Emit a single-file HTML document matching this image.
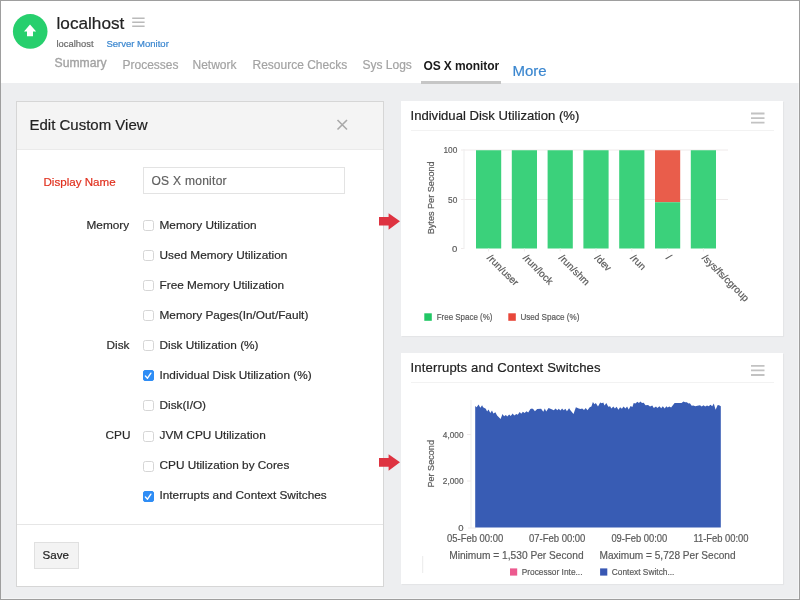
<!DOCTYPE html>
<html><head><meta charset="utf-8">
<style>
*{margin:0;padding:0;box-sizing:border-box}
html,body{width:800px;height:600px;overflow:hidden;background:#fff}
body{position:relative;font-family:"Liberation Sans",sans-serif;color:#333}
.a{position:absolute;white-space:nowrap;line-height:1}
.t{will-change:transform;transform:translateX(-0.5px);-webkit-text-stroke:0.2px currentColor}
.g{will-change:transform}
.g text{stroke:#5a5a5a;stroke-width:0.2px}
#frame{position:absolute;left:0;top:0;width:800px;height:600px;border:1px solid #9e9e9e;pointer-events:none;z-index:50}
#bg{position:absolute;left:0;top:83px;width:800px;height:517px;background:#edeef0}
#modal{position:absolute;left:16px;top:101px;width:368px;height:486px;background:#fff;border:1px solid #d6d6d6}
#mhead{position:absolute;left:0;top:0;width:366px;height:48px;background:#f4f4f4;border-bottom:1px solid #eaeaea}
.card{position:absolute;left:401px;width:382px;background:#fff;box-shadow:1px 1px 1px rgba(0,0,0,0.035)}
.cb{position:absolute;left:143px;width:11px;height:11px;border:1px solid #d6d6d6;border-radius:2.5px;background:#fff}
.cbc{background:#2f8df5;border-color:#2f8df5;border-radius:2px}
.lbl{font-size:11.8px;color:#2b2b2b}
.ham{position:absolute;height:2px;background:#c4c4c4}
</style></head><body>
<div id="bg"></div>
<div class="a" style="left:798px;top:83px;width:1px;height:516px;background:#f4f5f6"></div>
<div class="a" style="left:0;top:598px;width:799px;height:1px;background:#f4f5f6"></div>

<!-- header -->
<svg class="a" style="left:0;top:0" width="60" height="60">
<circle cx="30.2" cy="31.4" r="17.3" fill="#27cf6d"/>
<path d="M30 24.6 L36.2 31.4 L33 31.4 L33 36.2 L27 36.2 L27 31.4 L24 31.4 Z" fill="#fff"/>
</svg>
<div class="a t" style="left:56.8px;top:14.5px;font-size:17.2px;color:#222">localhost</div>
<svg class="a" style="left:0;top:0" width="160" height="40"><path d="M132.2 18.2H144.6M132.2 22.2H144.6M132.2 26.2H144.6" stroke="#bababa" stroke-width="1.5"/></svg>
<div class="a t" style="left:57px;top:39px;font-size:9.4px;color:#6a6a6a">localhost</div>
<div class="a t" style="left:107px;top:39px;font-size:9.5px;color:#3a86cf">Server Monitor</div>

<div class="a t" style="left:54.5px;top:57.3px;font-size:12.2px;color:#a3a3a3;-webkit-text-stroke:0.35px #a3a3a3">Summary</div>
<div class="a t" style="left:122.5px;top:58.9px;font-size:12px;color:#a3a3a3">Processes</div>
<div class="a t" style="left:193px;top:58.9px;font-size:12px;color:#a3a3a3">Network</div>
<div class="a t" style="left:253px;top:58.9px;font-size:12px;color:#a3a3a3">Resource Checks</div>
<div class="a t" style="left:362.5px;top:58.9px;font-size:12px;color:#a3a3a3">Sys Logs</div>
<div class="a t" style="left:424px;top:59.9px;font-size:12px;color:#1a1a1a;font-weight:700;letter-spacing:-0.1px;-webkit-text-stroke:0">OS X monitor</div>
<div class="a" style="position:absolute;left:421px;top:81px;width:80px;height:3px;background:#c6c6c6"></div>
<div class="a t" style="left:512.5px;top:62.6px;font-size:15px;color:#3a86cf">More</div>

<!-- modal -->
<div id="modal">
  <div id="mhead"></div>
</div>
<div class="a t" style="left:29.5px;top:117.3px;font-size:15px;color:#222">Edit Custom View</div>
<svg class="a" style="left:330px;top:112px" width="24" height="24"><path d="M7.5 8 L17 17.5 M17 8 L7.5 17.5" stroke="#a9a9a9" stroke-width="1.6"/></svg>

<div class="a t" style="left:44px;top:176.2px;font-size:11.6px;color:#e0301e">Display Name</div>
<div class="a" style="left:143px;top:167px;width:202px;height:27px;border:1px solid #e3e3e3;background:#fff"></div>
<div class="a t" style="left:151.5px;top:175.3px;font-size:12px;color:#606060;letter-spacing:0.28px">OS X monitor</div>

<div class="a t lbl" style="left:87px;top:219.5px">Memory</div>
<div class="a t lbl" style="left:106.5px;top:339.9px">Disk</div>
<div class="a t lbl" style="left:106.3px;top:430.2px">CPU</div>

<div class="cb" style="top:219.8px"></div>
<div class="a t lbl" style="left:160px;top:219.5px">Memory Utilization</div>
<div class="cb" style="top:249.9px"></div>
<div class="a t lbl" style="left:160px;top:249.6px">Used Memory Utilization</div>
<div class="cb" style="top:280.0px"></div>
<div class="a t lbl" style="left:160px;top:279.7px">Free Memory Utilization</div>
<div class="cb" style="top:310.1px"></div>
<div class="a t lbl" style="left:160px;top:309.8px">Memory Pages(In/Out/Fault)</div>
<div class="cb" style="top:340.2px"></div>
<div class="a t lbl" style="left:160px;top:339.9px">Disk Utilization (%)</div>
<div class="cb cbc" style="top:370.3px"><svg width="9" height="9" style="position:absolute;left:0;top:0"><path d="M1.4 5.1 L3.5 7.2 L6.9 2.2" stroke="#fff" stroke-width="1.4" fill="none" stroke-linecap="round" stroke-linejoin="round"/></svg></div>
<div class="a t lbl" style="left:160px;top:370.0px">Individual Disk Utilization (%)</div>
<div class="cb" style="top:400.4px"></div>
<div class="a t lbl" style="left:160px;top:400.1px">Disk(I/O)</div>
<div class="cb" style="top:430.5px"></div>
<div class="a t lbl" style="left:160px;top:430.2px">JVM CPU Utilization</div>
<div class="cb" style="top:460.6px"></div>
<div class="a t lbl" style="left:160px;top:460.3px">CPU Utilization by Cores</div>
<div class="cb cbc" style="top:490.7px"><svg width="9" height="9" style="position:absolute;left:0;top:0"><path d="M1.4 5.1 L3.5 7.2 L6.9 2.2" stroke="#fff" stroke-width="1.4" fill="none" stroke-linecap="round" stroke-linejoin="round"/></svg></div>
<div class="a t lbl" style="left:160px;top:490.4px">Interrupts and Context Switches</div>

<div class="a" style="left:17px;top:524px;width:366px;height:1px;background:#e6e6e6"></div>
<div class="a" style="left:34px;top:542px;width:45px;height:27px;background:#f3f3f3;border:1px solid #e0e0e0"></div>
<div class="a t" style="left:43px;top:549.3px;font-size:11.6px;color:#222">Save</div>

<!-- cards -->
<div class="card" style="top:101px;height:235px"></div>
<div class="card" style="top:353px;height:231px"></div>

<div class="a t" style="left:410.5px;top:109px;font-size:13.1px;color:#222">Individual Disk Utilization (%)</div>
<svg class="a" style="left:0;top:0" width="800" height="600"><path d="M751 113.5H764.5M751 118.1H764.5M751 122.7H764.5M751 365.9H764.5M751 370.4H764.5M751 375H764.5" stroke="#c2c2c2" stroke-width="1.8"/></svg>
<div class="a" style="left:411px;top:130px;width:363px;height:1px;background:#f2f2f2"></div>

<div class="a t" style="left:410.5px;top:361px;font-size:13.1px;color:#222;letter-spacing:0.15px">Interrupts and Context Switches</div>

<div class="a" style="left:411px;top:382px;width:363px;height:1px;background:#f2f2f2"></div>

<!-- charts -->
<svg class="a g" style="left:0;top:0;z-index:5" width="800" height="600" font-family="Liberation Sans">
<g>
<line x1="461" y1="150" x2="728" y2="150" stroke="#efeaea" stroke-width="1"/>
<line x1="461" y1="199.5" x2="728" y2="199.5" stroke="#efeaea" stroke-width="1"/>
<line x1="461" y1="248.5" x2="464" y2="248.5" stroke="#efeaea" stroke-width="1"/>
<line x1="464" y1="149" x2="464" y2="249" stroke="#f0f0f0" stroke-width="1.2"/>
<rect x="476.0" y="150.25" width="25.2" height="98.25" fill="#3bd17b"/><rect x="511.8" y="150.25" width="25.2" height="98.25" fill="#3bd17b"/><rect x="547.6" y="150.25" width="25.2" height="98.25" fill="#3bd17b"/><rect x="583.4" y="150.25" width="25.2" height="98.25" fill="#3bd17b"/><rect x="619.2" y="150.25" width="25.2" height="98.25" fill="#3bd17b"/><rect x="655.0" y="150.25" width="25.2" height="52" fill="#e95d4b"/><rect x="655.0" y="202.25" width="25.2" height="46.25" fill="#3bd17b"/><rect x="690.8" y="150.25" width="25.2" height="98.25" fill="#3bd17b"/>
<line x1="488.6" y1="248.5" x2="488.6" y2="251.5" stroke="#efeaea" stroke-width="1"/><line x1="524.4" y1="248.5" x2="524.4" y2="251.5" stroke="#efeaea" stroke-width="1"/><line x1="560.2" y1="248.5" x2="560.2" y2="251.5" stroke="#efeaea" stroke-width="1"/><line x1="596.0" y1="248.5" x2="596.0" y2="251.5" stroke="#efeaea" stroke-width="1"/><line x1="631.8" y1="248.5" x2="631.8" y2="251.5" stroke="#efeaea" stroke-width="1"/><line x1="667.6" y1="248.5" x2="667.6" y2="251.5" stroke="#efeaea" stroke-width="1"/><line x1="703.4" y1="248.5" x2="703.4" y2="251.5" stroke="#efeaea" stroke-width="1"/>
<text x="457.3" y="153.25" font-size="9.5" fill="#5a5a5a" text-anchor="end" textLength="13.9" lengthAdjust="spacingAndGlyphs">100</text>
<text x="457.3" y="202.75" font-size="9.5" fill="#5a5a5a" text-anchor="end" textLength="9.3" lengthAdjust="spacingAndGlyphs">50</text>
<text x="457.3" y="251.9" font-size="9.5" fill="#5a5a5a" text-anchor="end">0</text>
<text x="434" y="197.8" font-size="9.5" fill="#5a5a5a" text-anchor="middle" transform="rotate(-90 434 197.8)" textLength="73" lengthAdjust="spacingAndGlyphs">Bytes Per Second</text>
<text x="486.6" y="258.5" transform="rotate(45 486.6 258.5)" font-size="10" fill="#5a5a5a">/run/user</text><text x="522.4" y="258.5" transform="rotate(45 522.4 258.5)" font-size="10" fill="#5a5a5a">/run/lock</text><text x="558.2" y="258.5" transform="rotate(45 558.2 258.5)" font-size="10" fill="#5a5a5a">/run/shm</text><text x="594.0" y="258.5" transform="rotate(45 594.0 258.5)" font-size="10" fill="#5a5a5a">/dev</text><text x="629.8" y="258.5" transform="rotate(45 629.8 258.5)" font-size="10" fill="#5a5a5a">/run</text><text x="665.6" y="258.5" transform="rotate(45 665.6 258.5)" font-size="10" fill="#5a5a5a">/</text><text x="701.4" y="258.5" transform="rotate(45 701.4 258.5)" font-size="10" fill="#5a5a5a">/sys/fs/cgroup</text>
<rect x="424.3" y="313.3" width="7.5" height="7.5" fill="#22c765"/>
<text x="436.7" y="319.6" font-size="9.5" fill="#5a5a5a" textLength="55.8" lengthAdjust="spacingAndGlyphs">Free Space (%)</text>
<rect x="508.3" y="313.3" width="7.5" height="7.5" fill="#e8473a"/>
<text x="520.4" y="319.6" font-size="9.5" fill="#5a5a5a" textLength="59" lengthAdjust="spacingAndGlyphs">Used Space (%)</text>
</g>
<g>
<line x1="471" y1="400" x2="471" y2="528" stroke="#f0f0f0" stroke-width="1.2"/>
<line x1="467" y1="434.5" x2="471" y2="434.5" stroke="#efeaea" stroke-width="1"/>
<line x1="467" y1="481" x2="471" y2="481" stroke="#efeaea" stroke-width="1"/>
<line x1="468" y1="528" x2="476" y2="528" stroke="#efeaea" stroke-width="1"/>
<path d="M475.2 527.5 L475.2 405.9 L476.6 407.2 L478.6 404.4 L480.3 407.7 L482.1 405.3 L483.1 407.2 L484.4 408.1 L485.8 408.8 L487.1 411.6 L488.5 409.4 L490.3 412.9 L492.0 410.6 L493.4 413.4 L495.4 412.3 L497.1 415.6 L500.6 419.1 L502.5 414.1 L504.1 416.2 L505.9 415.0 L507.2 416.4 L509.2 414.4 L510.7 416.0 L512.7 413.4 L514.2 415.6 L516.4 414.1 L517.7 414.7 L519.7 412.1 L521.2 413.8 L522.9 411.8 L524.7 412.9 L526.4 411.2 L528.2 412.5 L530.4 409.0 L532.1 408.6 L533.4 409.2 L534.9 411.2 L537.2 409.0 L541.1 408.8 L543.3 411.8 L544.8 408.6 L546.2 411.6 L548.6 408.1 L551.6 409.2 L553.8 410.3 L555.6 408.6 L557.3 410.3 L558.8 408.8 L560.4 410.6 L562.1 408.6 L563.7 410.3 L565.4 408.8 L566.9 411.2 L569.1 408.3 L570.4 410.3 L573.5 414.1 L575.9 407.2 L578.7 408.6 L580.5 409.0 L582.2 408.6 L584.0 409.9 L585.7 408.1 L587.5 410.3 L589.7 407.2 L591.4 406.4 L592.9 402.0 L594.5 404.2 L595.8 402.9 L598.0 406.4 L600.2 402.4 L601.9 403.3 L603.3 402.4 L604.5 405.6 L606.3 403.1 L608.3 406.8 L610.1 406.2 L611.4 408.5 L613.3 406.4 L614.9 408.5 L616.6 406.8 L618.4 409.7 L620.1 407.3 L621.9 408.8 L623.6 406.6 L625.4 408.5 L627.1 406.6 L628.7 409.4 L630.6 405.9 L632.4 407.1 L633.7 403.1 L635.4 403.6 L637.4 401.8 L638.9 402.9 L640.4 401.6 L642.0 403.1 L643.7 402.7 L645.5 405.3 L648.1 404.9 L650.0 406.6 L652.3 405.6 L653.8 407.9 L656.0 406.6 L657.3 407.9 L659.5 406.2 L661.2 408.2 L662.8 406.2 L664.7 408.4 L666.3 406.2 L667.6 407.5 L669.4 406.4 L671.1 407.5 L674.6 402.9 L681.6 403.1 L683.4 401.4 L685.1 402.2 L686.9 402.2 L688.4 403.6 L689.9 403.3 L691.7 405.7 L693.4 405.6 L695.2 406.2 L697.4 405.7 L700.0 405.3 L701.7 406.4 L703.5 405.3 L705.2 406.6 L707.0 405.6 L708.7 406.2 L710.5 404.7 L712.2 406.2 L713.8 403.6 L715.6 409.7 L717.7 404.9 L719.1 405.3 L720.8 406.2 L720.8 527.5 Z" fill="#385cb4"/>
<text x="463.5" y="437.5" font-size="9.5" fill="#5a5a5a" text-anchor="end" textLength="20.7" lengthAdjust="spacingAndGlyphs">4,000</text>
<text x="463.5" y="484.3" font-size="9.5" fill="#5a5a5a" text-anchor="end" textLength="20.7" lengthAdjust="spacingAndGlyphs">2,000</text>
<text x="463.5" y="530.8" font-size="9.5" fill="#5a5a5a" text-anchor="end">0</text>
<text x="434" y="463.8" font-size="9.5" fill="#5a5a5a" text-anchor="middle" transform="rotate(-90 434 463.8)" textLength="47.5" lengthAdjust="spacingAndGlyphs">Per Second</text>
<text x="475.1" y="541.7" font-size="10" fill="#5a5a5a" text-anchor="middle" textLength="56.2" lengthAdjust="spacingAndGlyphs">05-Feb 00:00</text>
<text x="557.2" y="541.7" font-size="10" fill="#5a5a5a" text-anchor="middle" textLength="56.4" lengthAdjust="spacingAndGlyphs">07-Feb 00:00</text>
<text x="639.3" y="541.7" font-size="10" fill="#5a5a5a" text-anchor="middle" textLength="55.8" lengthAdjust="spacingAndGlyphs">09-Feb 00:00</text>
<text x="721" y="541.7" font-size="10" fill="#5a5a5a" text-anchor="middle" textLength="55.1" lengthAdjust="spacingAndGlyphs">11-Feb 00:00</text>
<text x="449.2" y="559" font-size="11" fill="#5a5a5a" textLength="134.4" lengthAdjust="spacingAndGlyphs">Minimum = 1,530 Per Second</text>
<text x="599.5" y="559" font-size="11" fill="#5a5a5a" textLength="136.1" lengthAdjust="spacingAndGlyphs">Maximum = 5,728 Per Second</text>
<line x1="422.7" y1="556" x2="422.7" y2="573" stroke="#ebebeb" stroke-width="1"/>
<rect x="510" y="568.4" width="7.2" height="7.2" fill="#ec5a8f"/>
<text x="521.7" y="575" font-size="9.5" fill="#5a5a5a" textLength="60.8" lengthAdjust="spacingAndGlyphs">Processor Inte...</text>
<rect x="600.1" y="568.4" width="7.2" height="7.2" fill="#3857b3"/>
<text x="611.8" y="575" font-size="9.5" fill="#5a5a5a" textLength="62.6" lengthAdjust="spacingAndGlyphs">Context Switch...</text>
</g>
</svg>
<!-- arrows -->
<svg class="a" style="left:370px;top:200px" width="40" height="300">
<path d="M9 17 L18.6 17 L18.6 13.2 L30 21.3 L18.6 29.8 L18.6 25.6 L9 25.6 Z" fill="#de3341"/>
<path d="M9 258 L18.6 258 L18.6 254.2 L30 262.3 L18.6 270.8 L18.6 266.7 L9 266.7 Z" fill="#de3341"/>
</svg>

<div id="frame"></div>
</body></html>
